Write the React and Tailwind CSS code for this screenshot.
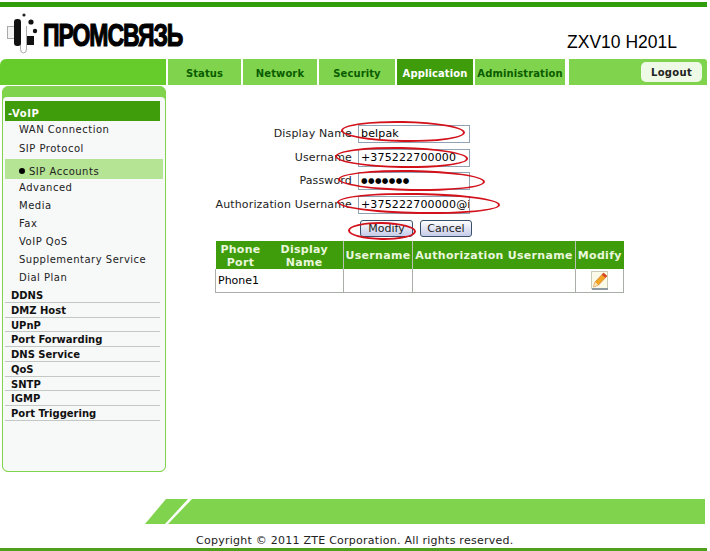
import React from 'react';

const tabs = [
  { label: 'Status', w: 'w-[73px]' },
  { label: 'Network', w: 'w-[74px]' },
  { label: 'Security', w: 'w-[76px]' },
  { label: 'Application', w: 'w-[76px]', active: true },
  { label: 'Administration', w: 'w-[90px]' },
];

const voipItems = ['Advanced', 'Media', 'Fax', 'VoIP QoS', 'Supplementary Service', 'Dial Plan'];
const menuItems = ['DDNS', 'DMZ Host', 'UPnP', 'Port Forwarding', 'DNS Service', 'QoS', 'SNTP', 'IGMP', 'Port Triggering'];

function Logo() {
  return (
    <div className="flex items-start">
      <svg width="38" height="48" viewBox="5 8 38 48">
        <rect x="7.5" y="26.5" width="9" height="12" fill="#f4f4f4" stroke="#aaa" />
        <path d="M20.5 26v23q0 4 3 4t3-4V26" fill="#fff" stroke="#aaa" strokeWidth="1" />
        <rect x="14" y="19" width="7" height="27" rx="3" fill="#111" />
        <rect x="27" y="36" width="7" height="9" fill="#111" />
        <circle cx="24" cy="15" r="1.6" fill="#222" />
        <circle cx="31" cy="22" r="2.6" fill="#111" />
        <circle cx="35" cy="31" r="2.2" fill="#111" />
      </svg>
      <span className='mt-[11px] inline-block origin-left scale-x-[0.72] font-["Liberation_Sans",sans-serif] text-[32px] leading-none font-bold tracking-[-1.5px] whitespace-nowrap text-black [-webkit-text-stroke:1.2px_#000]'>ПРОМСВЯЗЬ</span>
    </div>
  );
}

function Header() {
  return (
    <div className="flex h-[52px] items-start justify-between">
      <div className="mt-[1px] ml-[5px]">
        <Logo />
      </div>
      <div className='mt-[25px] mr-[30px] font-["Liberation_Sans",sans-serif] text-[17.5px] leading-[20px] text-black'>ZXV10 H201L</div>
    </div>
  );
}

function Nav() {
  return (
    <div className="flex h-[26px]">
      <div className="h-full w-[166px] rounded-tl-[6px] bg-[#66cc2c]" />
      <div className="ml-[2px] flex gap-[2px]">
        {tabs.map((t) => (
          <div
            key={t.label}
            className={`${t.w} flex items-center justify-center pt-[3px] text-[10px] font-bold tracking-[0.1px] ${t.active ? 'bg-[#3f9c0a] text-white' : 'bg-[#7fd34d] text-[#0b5c00]'}`}
          >
            {t.label}
          </div>
        ))}
      </div>
      <div className="ml-[4px] flex w-[138px] items-start justify-end rounded-tr-[3px] bg-[#7fd34d] pt-[3px] pr-[5px]">
        <div className="flex h-[20px] w-[61px] items-center justify-center rounded-[5px] bg-[#eef9e6] text-[10px] font-bold tracking-[0.3px] text-[#222]">Logout</div>
      </div>
    </div>
  );
}

function Sidebar() {
  const sub = 'pl-[14px] text-[10px] leading-[18px] tracking-[0.5px] text-[#222]';
  return (
    <div className="ml-[2px] h-[386px] w-[164px] shrink-0 overflow-hidden rounded-[6px] border border-[#7fd34d] bg-[#7fd34d]">
      <div className="mt-[10px] h-[375px] rounded-t-[4px] rounded-b-[5px] bg-[#f7f8f8] pt-[4px] pl-[2px]">
        <div className="h-[20px] w-[155px] bg-[#3f9c0a] pl-[3px] text-[10px] leading-[25px] font-bold tracking-[0.6px] text-white">-VoIP</div>
        <div className={`h-[19px] ${sub}`}>WAN Connection</div>
        <div className={`h-[19px] ${sub}`}>SIP Protocol</div>
        <div className={`h-[20px] w-[158px] bg-[#b5e494] pt-[4px] ${sub}`}>
          <span className="mr-[4px] mb-[3px] inline-block h-[6px] w-[6px] rounded-full bg-black align-middle" />
          SIP Accounts
        </div>
        <div className="mb-[1px]">
          {voipItems.map((item) => (
            <div key={item} className={`h-[18px] ${sub}`}>{item}</div>
          ))}
        </div>
        {menuItems.map((item) => (
          <div key={item} className="h-[14.75px] w-[155px] border-b border-[#c4c8c4] pl-[6px] text-[10px] leading-[16px] font-bold text-[#111]">
            {item}
          </div>
        ))}
      </div>
    </div>
  );
}

function FormRow({ label, value, password }) {
  return (
    <div className="flex h-[23.5px] items-start justify-end">
      <label className="mr-[6px] text-[11px] leading-[18px] tracking-[0.15px] text-[#222]">{label}</label>
      <div className={`h-[18px] w-[112px] overflow-hidden border border-[#8fa3b5] bg-white pl-[2px] leading-[16px] whitespace-nowrap text-black ${password ? 'text-[7.5px] tracking-[0.4px]' : 'text-[11px] tracking-[0.15px]'}`}>
        {value}
      </div>
    </div>
  );
}

function EditIcon() {
  return (
    <svg width="18" height="19" viewBox="0 0 18 19">
      <rect x="0.5" y="0.5" width="16" height="17" fill="#fbf9e8" stroke="#c9cdb8" />
      <path d="M1 17h16v2H1z" fill="#8d9aa0" />
      <path d="M12.5 2l3.5 3-8.5 9-5 2 1.5-5z" fill="#f3a626" stroke="#cf6a1b" strokeWidth="0.6" />
      <path d="M12.5 2l3.5 3-1.7 1.8-3.5-3z" fill="#d9402a" />
      <path d="M4 11l3.5 3-5 2z" fill="#f7e1b0" />
    </svg>
  );
}

function SipTable() {
  const head = 'pt-[1px] text-center text-[11px] leading-[13px] font-bold tracking-[0.3px] text-[#e9f7dd]';
  const td = 'border-r border-b border-[#a9aea9]';
  return (
    <table className="ml-[49px] w-[408px] table-fixed border-collapse">
      <colgroup>
        <col className="w-[50px]" />
        <col className="w-[78px]" />
        <col className="w-[69px]" />
        <col className="w-[163px]" />
        <col className="w-[48px]" />
      </colgroup>
      <thead>
        <tr className="h-[28px] bg-[#3f9c0a]">
          <th className={head}>Phone<br />Port</th>
          <th className={`${head} border-r border-[#b9c2b5]`}>Display<br />Name</th>
          <th className={`${head} border-r border-[#b9c2b5]`}>Username</th>
          <th className={`${head} border-r border-[#b9c2b5]`}>Authorization Username</th>
          <th className={head}>Modify</th>
        </tr>
      </thead>
      <tbody>
        <tr className="h-[23px]">
          <td colSpan={2} className={`${td} border-l pt-[2px] pl-[2px] text-[11px] text-black`}>Phone1</td>
          <td className={td} />
          <td className={td} />
          <td className={td}>
            <div className="flex justify-center"><EditIcon /></div>
          </td>
        </tr>
      </tbody>
    </table>
  );
}

// the hand-drawn red circles on top of the form
function Marks() {
  const marks = [
    'left-[341px] top-[121px] h-[21px] w-[124px]',
    'left-[335px] top-[147px] h-[21px] w-[133px]',
    'left-[338px] top-[170px] h-[21px] w-[147px]',
    'left-[337px] top-[193px] h-[21px] w-[163px]',
    'left-[348px] top-[222px] h-[18px] w-[68px]',
  ];
  return (
    <>
      {marks.map((m) => (
        <div key={m} className={`absolute rotate-[1deg] rounded-[50%] border-2 border-[#d2111b] ${m}`} />
      ))}
    </>
  );
}

function Main() {
  return (
    <div className="min-w-0 flex-1 pt-[39px]">
      <div className="w-[304px]">
        <FormRow label="Display Name" value="belpak" />
        <FormRow label="Username" value="+375222700000" />
        <FormRow label="Password" value="●●●●●●●" password />
        <FormRow label="Authorization Username" value="+375222700000@ip" />
      </div>
      <div className="mt-[1px] ml-[194px] flex h-[21px] gap-[7px]">
        <button className="h-[17px] w-[53px] rounded-[3px] border border-[#38506a] bg-gradient-to-b from-white to-[#c6cbe8] text-[11px] leading-[14px] text-[#222]">Modify</button>
        <button className="h-[17px] w-[52px] rounded-[3px] border border-[#38506a] bg-gradient-to-b from-white to-[#c6cbe8] text-[11px] leading-[14px] text-[#222]">Cancel</button>
      </div>
      <SipTable />
    </div>
  );
}

function Footer() {
  return (
    <div className="mt-auto">
      <div className="ml-[145px] flex h-[25px] w-[560px]">
        <svg width="560" height="25" viewBox="0 0 560 25">
          <path d="M0 25L21 0H43L20 25z" fill="#7fd34d" />
          <path d="M23 25L47 0H560V25z" fill="#7fd34d" />
        </svg>
      </div>
      <div className="mt-[9px] h-[15px] pl-[196px] text-[11px] leading-[15px] tracking-[0.25px] text-[#222]">Copyright © 2011 ZTE Corporation. All rights reserved.</div>
      <div className="h-[3px] bg-[#4f9f1e]" />
    </div>
  );
}

export default function App() {
  return (
    <div className='relative flex h-[551px] w-[710px] flex-col overflow-hidden bg-white pr-[3px] font-["DejaVu_Sans",sans-serif]'>
      <div className="mt-[2px] h-[5px] bg-[#2f9e0a]" />
      <Header />
      <Nav />
      <div className="mt-[1px] flex">
        <Sidebar />
        <Main />
      </div>
      <Marks />
      <Footer />
    </div>
  );
}
